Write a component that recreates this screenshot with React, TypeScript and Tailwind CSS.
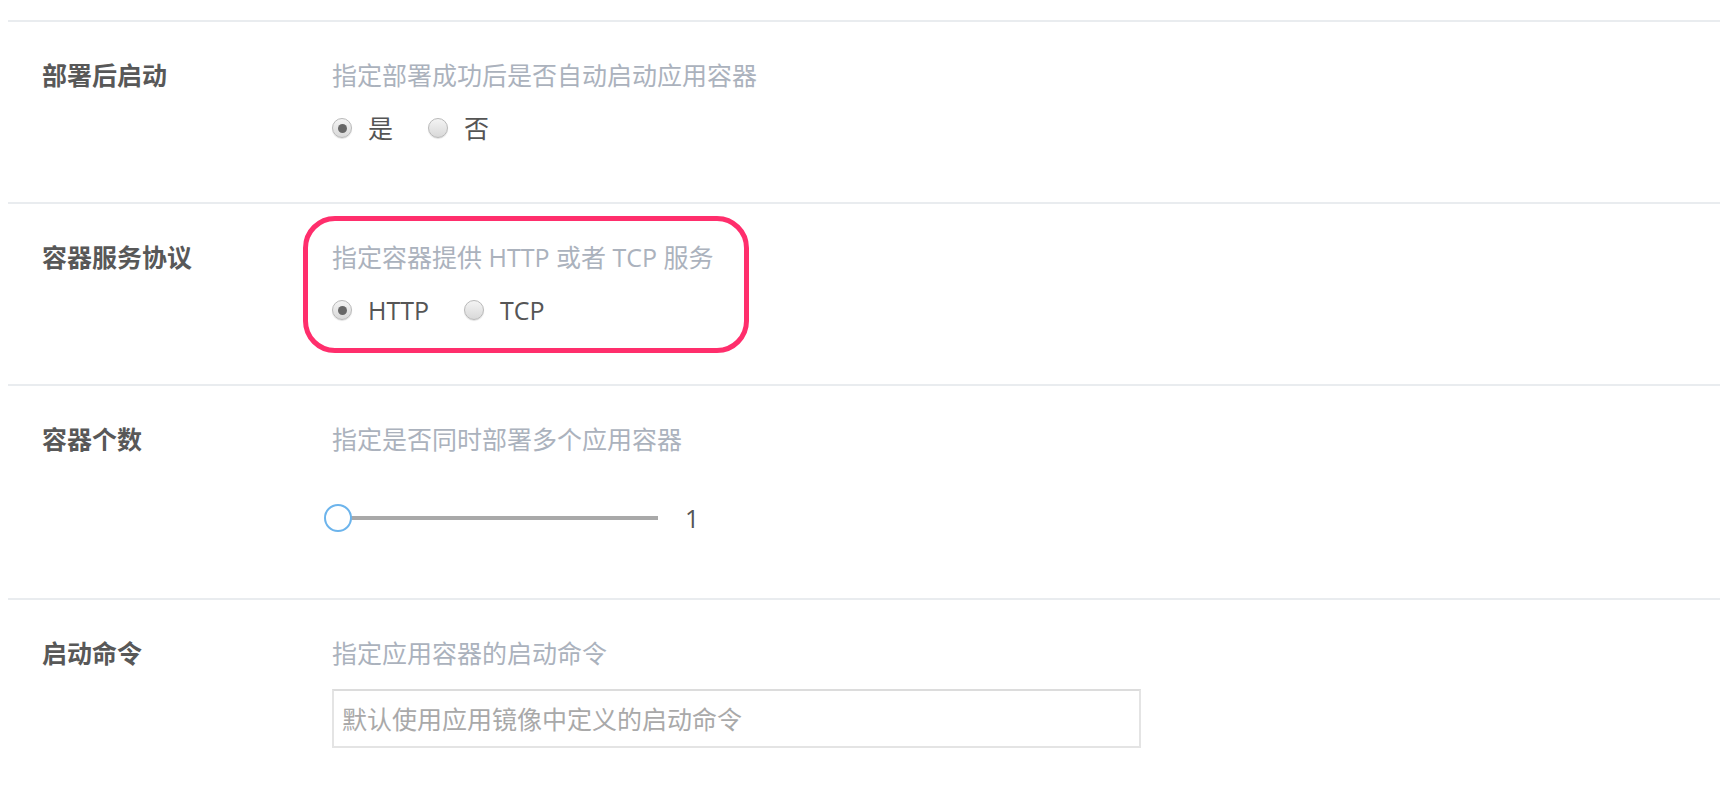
import { useState } from "react";

const font = "font-['Open_Sans','Noto_Sans_CJK_SC',sans-serif]";

function Radio({ checked, label, onClick }: { checked: boolean; label: string; onClick: () => void }) {
  return (
    <button type="button" onClick={onClick} className="flex items-center gap-[16px] mr-[35px] h-[36px]">
      <span className="w-5 h-5 rounded-full border border-[#b9b9b9] bg-linear-to-b from-[#f4f4f4] to-[#d9d9d9] shadow-[0_1px_1px_rgba(0,0,0,0.12)] flex items-center justify-center">
        {checked && <span className="w-[9px] h-[9px] rounded-full bg-[#676767]" />}
      </span>
      <span className="text-[25px] leading-[36px] text-[#555]">{label}</span>
    </button>
  );
}

function Row({ label, desc, pb, children }: { label: string; desc: string; pb: string; children: React.ReactNode }) {
  return (
    <div className={`ml-[8px] border-t-2 border-[#e9ecef] flex pt-[35px] ${pb}`}>
      <div className="w-[290px] ml-[34px] shrink-0 text-[25px] leading-[36px] font-bold text-[#585858]">{label}</div>
      <div className="relative flex-1">
        <p className="text-[25px] leading-[36px] text-[#abb2bd]">{desc}</p>
        {children}
      </div>
    </div>
  );
}

export default function App() {
  const [start, setStart] = useState(true);
  const [proto, setProto] = useState("HTTP");
  const [count] = useState(1);

  return (
    <div className={`min-h-screen bg-white pt-[20px] ${font}`}>
      <Row label="部署后启动" desc="指定部署成功后是否自动启动应用容器" pb="pb-[56px]">
        <div className="flex mt-[17px]">
          <Radio checked={start} label="是" onClick={() => setStart(true)} />
          <Radio checked={!start} label="否" onClick={() => setStart(false)} />
        </div>
      </Row>

      <Row label="容器服务协议" desc="指定容器提供 HTTP 或者 TCP 服务" pb="pb-[56px]">
        <div className="flex mt-[17px]">
          <Radio checked={proto === "HTTP"} label="HTTP" onClick={() => setProto("HTTP")} />
          <Radio checked={proto === "TCP"} label="TCP" onClick={() => setProto("TCP")} />
        </div>
        {/* highlight annotation */}
        <div className="absolute left-[-29px] top-[-23px] w-[446px] h-[137px] rounded-[32px] border-[5px] border-[#ff2e6c] pointer-events-none" />
      </Row>

      <Row label="容器个数" desc="指定是否同时部署多个应用容器" pb="pb-[66px]">
        <div className="flex items-center mt-[47px] h-[28px]">
          <div className="relative w-[334px] h-[28px] -ml-[8px] flex items-center">
            <div className="absolute left-[14px] right-0 h-1 bg-[#a9a9a9]" />
            <div className="absolute left-0 top-0 w-[28px] h-[28px] rounded-full border-2 border-[#6cb4ec] bg-white" />
          </div>
          <span className="ml-[27px] text-[25px] leading-[36px] text-[#555]">{count}</span>
        </div>
      </Row>

      <Row label="启动命令" desc="指定应用容器的启动命令" pb="pb-[40px]">
        <input
          placeholder="默认使用应用镜像中定义的启动命令"
          className="mt-[18px] block w-[809px] h-[59px] border-2 border-[#e4e4e4] border-t-[#dcdcdc] pl-[8px] text-[25px] text-[#555] placeholder:text-[#a9a9a9] outline-none"
        />
      </Row>
    </div>
  );
}
